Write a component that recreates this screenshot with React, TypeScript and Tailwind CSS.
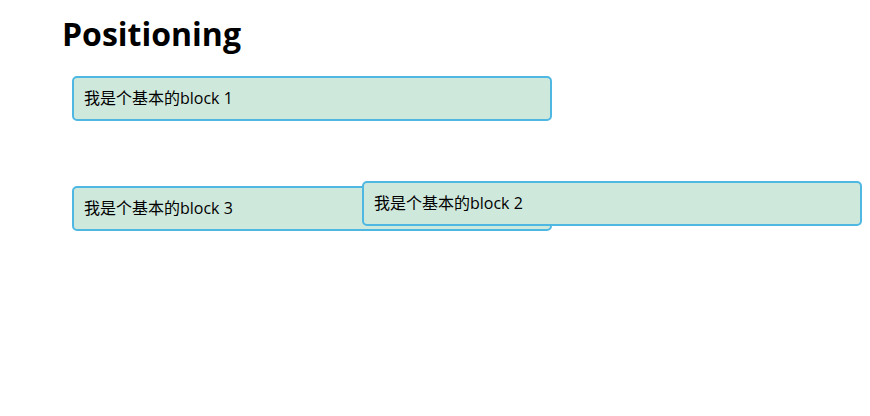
export default function App() {
  const font = { fontFamily: '"Open Sans", "Noto Sans CJK SC", sans-serif' };
  const block =
    "rounded-[5px] border-2 border-[#4fb8e2] bg-[#cfe8dc] px-[10px] py-[10px] text-[16px] leading-[21px] text-black";

  return (
    <div className="min-h-[416px] w-[870px] bg-white pl-[62px] pt-[12px]" style={font}>
      <h1 className="text-[32px] font-bold leading-[44px] text-black">Positioning</h1>
      <div className="ml-[10px] mt-[20px] flex w-[480px] flex-col gap-[10px]">
        <div className={block}>我是个基本的block 1</div>
        {/* relative offset: keeps its slot in the flow */}
        <div className={`${block} relative left-[290px] top-[50px] z-10 w-[500px]`}>我是个基本的block 2</div>
        <div className={block}>我是个基本的block 3</div>
      </div>
    </div>
  );
}
